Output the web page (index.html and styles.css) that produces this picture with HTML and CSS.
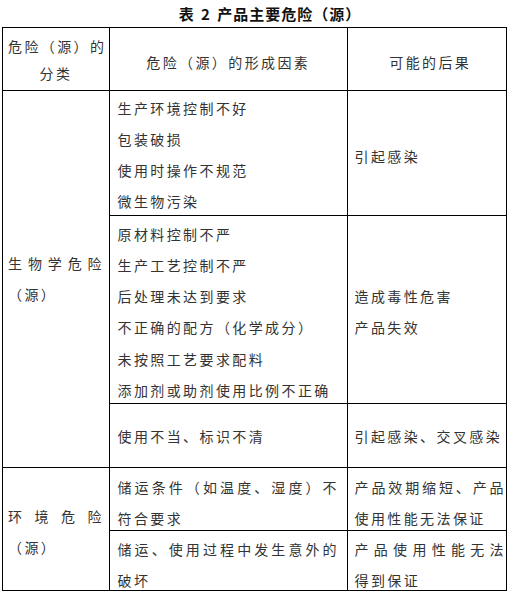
FILE: index.html
```html
<!DOCTYPE html>
<html lang="zh-CN">
<head>
<meta charset="utf-8">
<title>表 2 产品主要危险（源）</title>
<link rel="stylesheet" href="styles.css">
</head>
<body>
<div class="page">
  <h1 class="title">表 2 产品主要危险（源）</h1>
  <div class="risk">
    <div class="cell cat head-cat"><span class="full">危险（源）的</span><span class="ln center">分类</span></div>
    <div class="cell factor head">危险（源）的形成因素</div>
    <div class="cell result head">可能的后果</div>

    <div class="cell cat bio"><span class="full">生物学危险</span><span class="ln">（源）</span></div>
    <div class="cell factor row-a"><span class="ln">生产环境控制不好</span><span class="ln">包装破损</span><span class="ln">使用时操作不规范</span><span class="ln">微生物污染</span></div>
    <div class="cell result row-a-res"><span class="ln">引起感染</span></div>

    <div class="cell factor row-b"><span class="ln">原材料控制不严</span><span class="ln">生产工艺控制不严</span><span class="ln">后处理未达到要求</span><span class="ln">不正确的配方（化学成分）</span><span class="ln">未按照工艺要求配料</span><span class="ln">添加剂或助剂使用比例不正确</span></div>
    <div class="cell result row-b-res"><span class="ln">造成毒性危害</span><span class="ln">产品失效</span></div>

    <div class="cell factor row-c"><span class="ln">使用不当、标识不清</span></div>
    <div class="cell result row-c"><span class="ln">引起感染、交叉感染</span></div>

    <div class="cell cat env"><span class="full">环境危险</span><span class="ln">（源）</span></div>
    <div class="cell factor row-d"><span class="full">储运条件（如温度、湿度）不</span><span class="ln">符合要求</span></div>
    <div class="cell result row-d"><span class="full">产品效期缩短、产品</span><span class="ln">使用性能无法保证</span></div>

    <div class="cell factor row-e"><span class="full">储运、使用过程中发生意外的</span><span class="ln">破坏</span></div>
    <div class="cell result row-e"><span class="full">产品使用性能无法</span><span class="ln">得到保证</span></div>
  </div>
</div>
</body>
</html>
```
FILE: styles.css
```css
html, body {
  margin: 0;
  padding: 0;
  background: #fff;
}

body {
  font-family: "Noto Sans CJK SC", "Noto Sans", sans-serif;
  color: #333;
}

.page {
  width: 512px;
  padding-left: 2px;
  box-sizing: border-box;
}

.title {
  margin: 0;
  height: 27px;
  line-height: 28px;
  font-size: 15px;
  font-weight: bold;
  letter-spacing: 1px;
  word-spacing: 2px;
  text-align: center;
  text-indent: 26px;
  color: #111;
}

.risk {
  display: grid;
  width: 503px;
  grid-template-columns: 106px 237px 158px;
  grid-template-rows: 62px 124px 187px 63px 62px 59px;
  gap: 1px;
  background: #000;
  border: 1px solid #000;
}

.cell {
  background: #fff;
  font-size: 14px;
  line-height: 31.3px;
  letter-spacing: 2.4px;
  overflow: visible;
  min-width: 0;
  min-height: 0;
}

.ln {
  display: block;
  white-space: nowrap;
}

.full {
  display: block;
  white-space: nowrap;
  text-align: justify;
  text-align-last: justify;
}

.center {
  text-align: center;
}

.cat {
  padding: 0 5px 0 5px;
}

.factor {
  padding: 0 8px 0 7.5px;
}

.result {
  padding: 0 0 0 6.5px;
}

.head-cat {
  padding-top: 5px;
  line-height: 27px;
}

.head {
  padding-top: 19px;
  text-align: center;
}

.bio {
  grid-row: span 3;
  padding-top: 157px;
}

.env {
  grid-row: span 2;
  padding-top: 33px;
}

.row-a { padding-top: 1.5px; }
.row-a-res { padding-top: 49.5px; }
.row-b { padding-top: 2.5px; }
.row-b-res { padding-top: 64.5px; }
.row-c { padding-top: 16.5px; }
.row-d { padding-top: 3.5px; }
.row-e { padding-top: 2.5px; }
```
